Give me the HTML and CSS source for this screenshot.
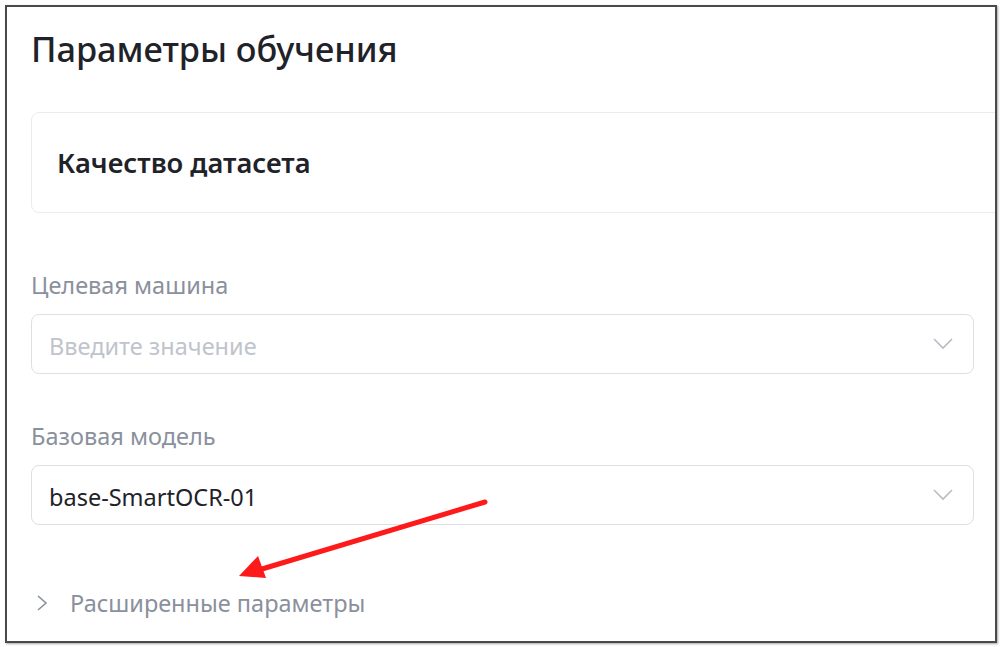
FILE: index.html
```html
<!DOCTYPE html>
<html lang="ru">
<head>
    <meta charset="UTF-8">
    <meta name="viewport" content="width=device-width, initial-scale=1.0">
    <title>Параметры обучения</title>
    <link rel="stylesheet" href="styles.css">
</head>
<body>
    <div class="frame">
        <div class="panel">
            <h1 class="title">Параметры обучения</h1>
            <div class="card">
                <h2>Качество датасета</h2>
            </div>
            <div class="field">
                <label>Целевая машина</label>
                <div class="select">
                    <span class="placeholder">Введите значение</span>
                    <svg class="chevron" width="20" height="12" viewBox="0 0 20 12"><path d="M1 1 L10 10 L19 1" fill="none" stroke="#b8bcc4" stroke-width="1.6"/></svg>
                </div>
            </div>
            <div class="field second">
                <label>Базовая модель</label>
                <div class="select">
                    <span class="value">base-SmartOCR-01</span>
                    <svg class="chevron" width="20" height="12" viewBox="0 0 20 12"><path d="M1 1 L10 10 L19 1" fill="none" stroke="#b8bcc4" stroke-width="1.6"/></svg>
                </div>
            </div>
            <div class="advanced">
                <svg class="arrow-right" width="12" height="18" viewBox="0 0 12 18"><path d="M2 2 L10 9 L2 16" fill="none" stroke="#8a909c" stroke-width="1.6"/></svg>
                <span>Расширенные параметры</span>
            </div>
        </div>
        <!-- annotation arrow -->
        <svg class="pointer" width="1005" height="647" viewBox="0 0 1005 647">
            <line x1="485" y1="502" x2="262" y2="569" stroke="#ff1a1a" stroke-width="5" stroke-linecap="round"/>
            <polygon points="239,576 258,556 266,578" fill="#ff1a1a"/>
        </svg>
    </div>
</body>
</html>
```

FILE: styles.css
```css
body {
    margin: 0;
    padding: 5px;
    background: #fff;
    font-family: "Noto Sans", "Open Sans", sans-serif;
}
.frame {
    position: relative;
    width: 988px;
    height: 634px;
    border: 2px solid #4a4a4a;
    box-shadow: 1px 1px 2px rgba(0, 0, 0, 0.35);
    overflow: hidden;
    background: #fff;
}
.panel {
    padding: 0 21px 0 24px;
}
.title {
    margin: 0;
    padding-top: 19px;
    font-size: 34.3px;
    font-weight: 500;
    line-height: 46px;
    color: #1f2329;
}
.card {
    margin-top: 40px;
    width: 1000px;
    height: 99px;
    border: 1px solid #ececec;
    border-radius: 8px;
    display: flex;
    align-items: center;
    padding-left: 25px;
}
.card h2 {
    margin: 0;
    font-size: 27.3px;
    font-weight: 600;
    color: #1f2329;
}
.field {
    margin-top: 57px;
}
.field.second {
    margin-top: 47px;
}
.field label {
    display: block;
    font-size: 23.5px;
    line-height: 30px;
    color: #8a909c;
}
.select {
    margin-top: 14px;
    height: 58px;
    border: 1px solid #dcdfe6;
    border-radius: 8px;
    display: flex;
    align-items: center;
    justify-content: space-between;
    padding: 0 20px 0 17px;
}
.placeholder {
    padding-top: 4px;
    font-size: 23.5px;
    color: #c0c4cc;
}
.value {
    padding-top: 3px;
    font-size: 23.5px;
    color: #1f2329;
}
.advanced {
    margin-top: 63px;
    height: 30px;
    display: flex;
    align-items: center;
    gap: 22px;
    padding-left: 5px;
}
.advanced span {
    font-size: 23.5px;
    color: #8a909c;
}
.pointer {
    position: absolute;
    left: -7px;
    top: -7px;
}
```
